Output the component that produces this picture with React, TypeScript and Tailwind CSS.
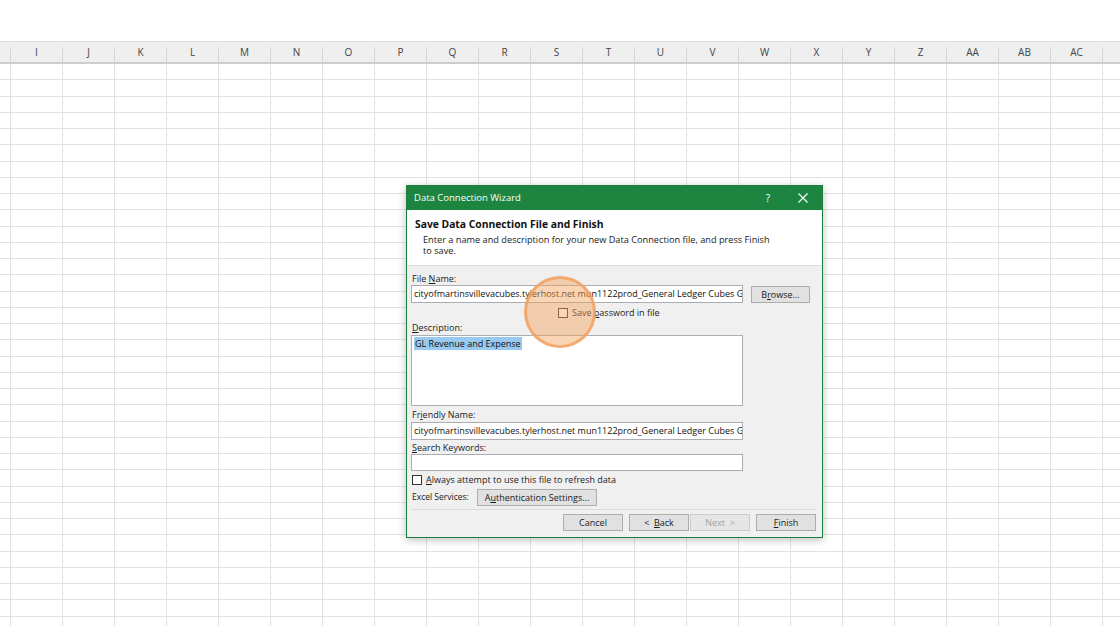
import React from 'react';

const columns = ['H', 'I', 'J', 'K', 'L', 'M', 'N', 'O', 'P', 'Q', 'R', 'S', 'T', 'U', 'V', 'W', 'X', 'Y', 'Z', 'AA', 'AB', 'AC', 'AD'];
const rows = Array.from({ length: 36 }, (_, i) => i);

const Btn: React.FC<{ children: React.ReactNode; disabled?: boolean; className?: string }> = ({ children, disabled, className = '' }) => (
  <div
    className={`h-[17px] flex items-center justify-center border text-[9px] leading-none whitespace-pre ${
      disabled ? 'border-[#cccccc] bg-[#e6e6e6] text-[#a3a3a3]' : 'border-[#adadad] bg-[#e1e1e1] text-[#1a1a1a]'
    } ${className}`}
  >
    {children}
  </div>
);

const Label: React.FC<{ children: React.ReactNode }> = ({ children }) => (
  <div className="h-[12px] flex items-center pl-[1px] text-[9px] leading-none text-[#1a1a1a]">{children}</div>
);

const Check: React.FC = () => <div className="w-[10px] h-[10px] border border-[#333] bg-white shrink-0" />;

const connection = 'cityofmartinsvillevacubes.tylerhost.net mun1122prod_General Ledger Cubes GL Revenue and Expense';

const App: React.FC = () => {
  return (
    <div className="relative w-[1120px] h-[626px] overflow-hidden bg-white font-['Open_Sans',sans-serif]">
      <div className="h-[41px]" />

      {/* column header */}
      <div className="flex -ml-[41px] h-[23px] bg-[#efefef] border-t border-[#dedede] border-b-2 border-b-[#cdcdcd]">
        {columns.map((c) => (
          <div key={c} className="w-[52px] shrink-0 flex items-end">
            <div className="flex-1 self-center text-center text-[10px] text-[#444]">{c}</div>
            <div className="w-px h-[15px] bg-[#d6d6d6]" />
          </div>
        ))}
      </div>

      {/* cells */}
      <div className="-ml-[41px]">
        {rows.map((r) => (
          <div key={r} className="flex h-[16.25px]">
            {columns.map((c) => (
              <div key={c} className="w-[52px] shrink-0 border-r border-b border-[#e2e2e2]" />
            ))}
          </div>
        ))}
      </div>

      {/* dialog */}
      <div className="absolute left-[406px] top-[185px] w-[417px] h-[353px] flex flex-col border border-[#1d7f3e] bg-[#f0f0f0] shadow-[0_2px_8px_rgba(0,0,0,0.25)]">
        <div className="h-[24px] shrink-0 flex items-center bg-[#1d8540] text-white">
          <span className="pl-[7px] flex-1 text-[9.5px]">Data Connection Wizard</span>
          <span className="w-[20px] text-center text-[10px] mr-[20px]">?</span>
          <svg width="10" height="10" viewBox="0 0 10 10" className="mr-[14px]">
            <path d="M0.5 0.5 L9.5 9.5 M9.5 0.5 L0.5 9.5" stroke="white" strokeWidth="1.1" />
          </svg>
        </div>

        <div className="h-[56px] shrink-0 bg-white border-b border-[#dcdcdc] pt-[7px]">
          <div className="pl-[8px] text-[10.3px] font-bold leading-[14px] text-[#111]">Save Data Connection File and Finish</div>
          <div className="pl-[16px] pt-[3px] w-[368px] text-[9.2px] leading-[11px] text-[#1a1a1a]">
            Enter a name and description for your new Data Connection file, and press Finish to save.
          </div>
        </div>

        <div className="flex-1 flex flex-col pl-[4px] pr-[6px] pt-[6px]">
          <Label>
            File&nbsp;<u>N</u>ame:
          </Label>
          <div className="mt-[1px] flex items-center gap-[8px]">
            <div className="w-[332px] h-[18px] bg-white border border-[#abadb3] flex items-center pl-[2px] text-[9px] text-[#111] whitespace-nowrap overflow-hidden">
              {connection}
            </div>
            <Btn className="w-[59px]">
              B<u>r</u>owse...
            </Btn>
          </div>
          <div className="h-[18px] pt-[2px] flex items-center gap-[4px] pl-[147px] text-[9px] text-[#1a1a1a]">
            <Check />
            <span>
              Save <u>p</u>assword in file
            </span>
          </div>
          <Label>
            <u>D</u>escription:
          </Label>
          <div className="mt-[2px] w-[332px] h-[71px] bg-white border border-[#abadb3] pl-[2px] pt-[2px] text-[9px] leading-[12px]">
            <span className="bg-[#99c9ef] text-[#111] px-[1px]">GL Revenue and Expense</span>
          </div>
          <div className="mt-[2px]">
            <Label>
              Fr<u>i</u>endly Name:
            </Label>
          </div>
          <div className="mt-[2px] w-[332px] h-[18px] bg-white border border-[#abadb3] flex items-center pl-[2px] text-[9px] text-[#111] whitespace-nowrap overflow-hidden">
            {connection}
          </div>
          <div className="mt-[1px]">
            <Label>
              <u>S</u>earch Keywords:
            </Label>
          </div>
          <div className="mt-[1px] w-[332px] h-[17px] bg-white border border-[#abadb3]" />
          <div className="h-[17px] flex items-center gap-[4px] pl-[1px] text-[9px] text-[#1a1a1a]">
            <Check />
            <span>
              <u>A</u>lways attempt to use this file to refresh data
            </span>
          </div>
          <div className="flex items-center mt-[1px]">
            <span className="pl-[1px] w-[66px] text-[8.5px] text-[#1a1a1a]">Excel Services:</span>
            <Btn className="w-[120px]">
              A<u>u</u>thentication Settings...
            </Btn>
          </div>
          <div className="mt-[3px] h-px bg-[#dcdcdc]" />
          <div className="mt-[4px] flex justify-end">
            <Btn className="w-[60px]">Cancel</Btn>
            <Btn className="w-[60px] ml-[6px]">
              {'<  '}
              <u>B</u>ack
            </Btn>
            <Btn disabled className="w-[60px] ml-[1px]">
              {'Next  >'}
            </Btn>
            <Btn className="w-[60px] ml-[6px]">
              <u>F</u>inish
            </Btn>
          </div>
        </div>
      </div>

      {/* click highlight */}
      <div className="absolute left-[524px] top-[276px] w-[72px] h-[72px] rounded-full bg-[#f5a25c]/45 border-[3px] border-[#f0a060]/80" />
    </div>
  );
};

export default App;
